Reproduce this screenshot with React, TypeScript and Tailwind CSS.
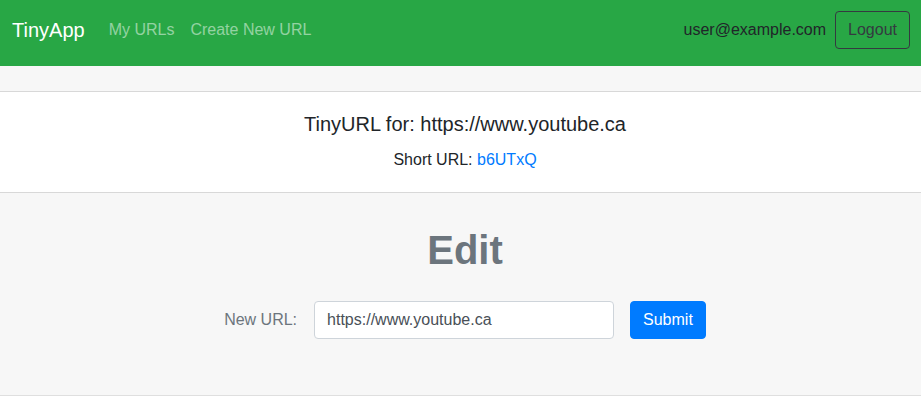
import React from 'react';

const App: React.FC = () => {
  return (
    <div className="min-h-[410px] bg-white font-['Liberation_Sans',Arial,sans-serif] text-[#212529]">
      <nav className="flex h-[66px] items-center justify-between bg-[#28a745] pb-[6px] pl-3 pr-[11px]">
        <div className="flex items-center">
          <a href="#" className="mr-4 text-[20px] leading-[30px] text-white">
            TinyApp
          </a>
          <a href="#" className="px-2 text-base leading-6 text-white/50">
            My URLs
          </a>
          <a href="#" className="px-2 text-base leading-6 text-white/50">
            Create New URL
          </a>
        </div>
        <div className="flex items-center gap-[9px]">
          <span className="text-base leading-6 text-[#212529]">user@example.com</span>
          <button className="h-[38px] rounded border border-[#343a40] px-3 text-base leading-6 text-[#343a40]">
            Logout
          </button>
        </div>
      </nav>

      <div className="border-b border-black/[0.125]">
        <div className="h-[26px] border-b border-black/[0.125] bg-[#f7f7f7]" />
        <div className="py-5 pl-[9px] text-center">
          <h5 className="mb-3 text-[20px] leading-6">TinyURL for: https://www.youtube.ca</h5>
          <p className="text-base leading-6">
            Short URL: <a href="#" className="text-[#007bff]">b6UTxQ</a>
          </p>
        </div>
        <div className="border-t border-black/[0.125] bg-[#f7f7f7] pb-[56px] pl-[9px] pt-[33px] text-center">
          <h1 className="text-[40px] font-bold leading-[48px] text-[#6c757d]">Edit</h1>
          <form className="mt-[27px] flex items-center justify-center" onSubmit={(e) => e.preventDefault()}>
            <label className="mr-[17px] text-base leading-6 text-[#6c757d]">New URL:</label>
            <input
              type="text"
              defaultValue="https://www.youtube.ca"
              className="h-[38px] w-[300px] rounded border border-[#ced4da] bg-white px-3 text-base text-[#495057] outline-none"
            />
            <button className="ml-4 h-[38px] rounded border border-[#007bff] bg-[#007bff] px-3 text-base leading-6 text-white">
              Submit
            </button>
          </form>
        </div>
      </div>
    </div>
  );
};

export default App;
